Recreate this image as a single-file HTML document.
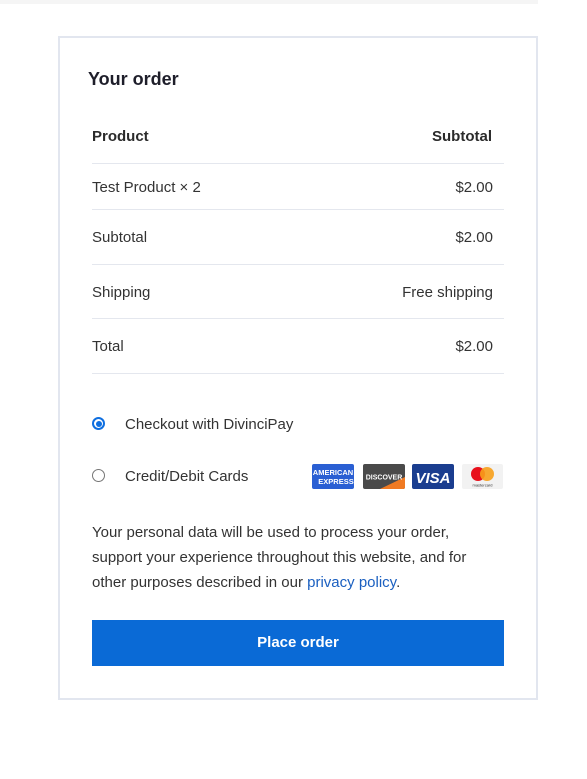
<!DOCTYPE html>
<html><head><meta charset="utf-8"><style>
*{margin:0;padding:0;box-sizing:border-box}
body{width:587px;height:779px;background:#fff;font-family:"Liberation Sans",sans-serif;color:#333;position:relative;overflow:hidden}
.a{position:absolute;white-space:nowrap}
.strip{left:0;top:0;width:538px;height:4px;background:#f5f5f5}
.card{left:58px;top:36px;width:480px;height:664px;border:2px solid #e2e6ef}
.line{left:92px;width:412px;height:1px;background:#e4e7ee}
.t{font-size:15px;line-height:18px}
.b{font-weight:bold;color:#2b2b2b}
.r{text-align:right}
.radio{width:13px;height:13px;border-radius:50%;border:1px solid #767676;background:#fff}
.radio.on{border:2px solid #0f6fe0}
.radio.on::after{content:"";position:absolute;left:1.5px;top:1.5px;width:6px;height:6px;border-radius:50%;background:#0f6fe0}
.btn{left:92px;top:620px;width:412px;height:46px;background:#0a6ad6;color:#fff;font-weight:bold;font-size:15px;text-align:center;line-height:46px}
a{color:#1a5fc0;text-decoration:none}
</style></head><body>
<div class="a strip"></div>
<div class="a card"></div>
<div class="a b" style="left:88px;top:69px;font-size:18px;color:#1e1e2a">Your order</div>

<div class="a t b" style="left:92px;top:128px">Product</div>
<div class="a t b r" style="right:95px;top:128px">Subtotal</div>
<div class="a line" style="top:163px"></div>
<div class="a t" style="left:92px;top:179px">Test Product × 2</div>
<div class="a t r" style="right:94px;top:179px">$2.00</div>
<div class="a line" style="top:209px"></div>
<div class="a t" style="left:92px;top:229px">Subtotal</div>
<div class="a t r" style="right:94px;top:229px">$2.00</div>
<div class="a line" style="top:264px"></div>
<div class="a t" style="left:92px;top:284px">Shipping</div>
<div class="a t r" style="right:94px;top:284px">Free shipping</div>
<div class="a line" style="top:318px"></div>
<div class="a t" style="left:92px;top:338px">Total</div>
<div class="a t r" style="right:94px;top:338px">$2.00</div>
<div class="a line" style="top:373px"></div>

<div class="a radio on" style="left:92px;top:417px"></div>
<div class="a t" style="left:125px;top:416px">Checkout with DivinciPay</div>
<div class="a radio" style="left:92px;top:469px"></div>
<div class="a t" style="left:125px;top:468px">Credit/Debit Cards</div>

<svg class="a" style="left:312px;top:463px" width="192" height="28" viewBox="0 0 192 28">
<rect x="0" y="1" width="42" height="25" rx="2" fill="#2a5fd3"/>
<text x="21" y="12" font-size="7.5" font-weight="bold" fill="#fff" text-anchor="middle" font-family="Liberation Sans">AMERICAN</text>
<text x="24" y="21" font-size="7.5" font-weight="bold" fill="#fff" text-anchor="middle" font-family="Liberation Sans">EXPRESS</text>
<rect x="51" y="1" width="42" height="25" rx="2" fill="#4a4a4a"/>
<path d="M68 26 L93 14 L93 24 Q93 26 91 26Z" fill="#f07a22"/>
<text x="72" y="16.5" font-size="7" font-weight="bold" fill="#fff" text-anchor="middle" font-family="Liberation Sans">DISCOVER</text>
<rect x="100" y="1" width="42" height="25" rx="2" fill="#1a3d8f"/>
<text x="121" y="20" font-size="15" font-weight="bold" font-style="italic" fill="#fff" text-anchor="middle" font-family="Liberation Sans">VISA</text>
<rect x="150" y="1" width="41" height="25" rx="2" fill="#f2f2f2"/>
<circle cx="166" cy="11" r="7" fill="#e8101c"/>
<circle cx="175" cy="11" r="7" fill="#f7a01b" fill-opacity=".9"/>
<text x="170.5" y="23.5" font-size="4" fill="#333" text-anchor="middle" font-family="Liberation Sans">mastercard</text>
</svg>

<div class="a t" style="left:92px;top:520px;line-height:25px">Your personal data will be used to process your order,<br>support your experience throughout this website, and for<br>other purposes described in our <a>privacy policy</a>.</div>

<div class="a btn">Place order</div>
</body></html>
